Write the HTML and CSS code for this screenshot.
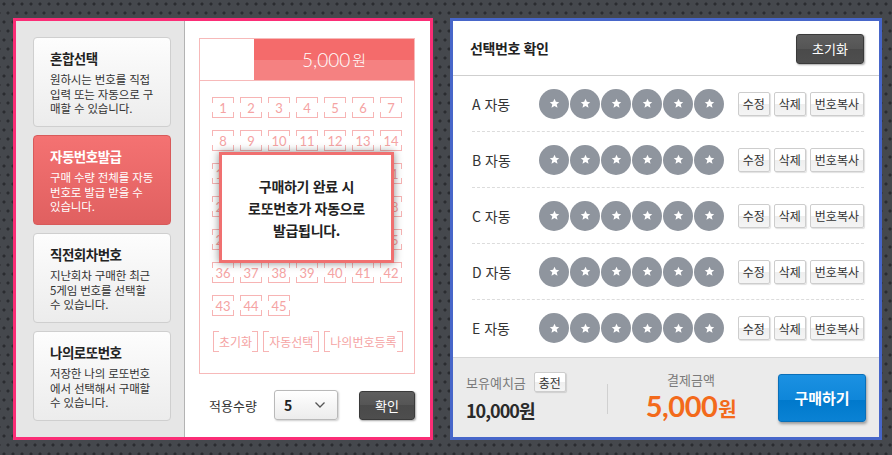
FILE: index.html
```html
<!DOCTYPE html>
<html lang="ko">
<head>
<meta charset="utf-8">
<link rel="stylesheet" href="styles.css">
</head>
<body>
<div class="page">
  <section class="left-panel">
    <nav class="modes">
      <div class="mode">
        <h3>혼합선택</h3>
        <p>원하시는 번호를 직접<br>입력 또는 자동으로 구<br>매할 수 있습니다.</p>
      </div>
      <div class="mode active">
        <h3>자동번호발급</h3>
        <p>구매 수량 전체를 자동<br>번호로 발급 받을 수<br>있습니다.</p>
      </div>
      <div class="mode">
        <h3>직전회차번호</h3>
        <p>지난회차 구매한 최근<br>5게임 번호를 선택할<br>수 있습니다.</p>
      </div>
      <div class="mode">
        <h3>나의로또번호</h3>
        <p>저장한 나의 로또번호<br>에서 선택해서 구매할<br>수 있습니다.</p>
      </div>
    </nav>
    <div class="ticket-area">
      <div class="ticket">
        <div class="ticket-head">
          <div class="ticket-blank"></div>
          <div class="ticket-price">5,000<span>원</span></div>
        </div>
        <div class="nums">
          <span class="num">1</span><span class="num">2</span><span class="num">3</span><span class="num">4</span><span class="num">5</span><span class="num">6</span><span class="num">7</span>
          <span class="num">8</span><span class="num">9</span><span class="num">10</span><span class="num">11</span><span class="num">12</span><span class="num">13</span><span class="num">14</span>
          <span class="num">15</span><span class="num">16</span><span class="num">17</span><span class="num">18</span><span class="num">19</span><span class="num">20</span><span class="num">21</span>
          <span class="num">22</span><span class="num">23</span><span class="num">24</span><span class="num">25</span><span class="num">26</span><span class="num">27</span><span class="num">28</span>
          <span class="num">29</span><span class="num">30</span><span class="num">31</span><span class="num">32</span><span class="num">33</span><span class="num">34</span><span class="num">35</span>
          <span class="num">36</span><span class="num">37</span><span class="num">38</span><span class="num">39</span><span class="num">40</span><span class="num">41</span><span class="num">42</span>
          <span class="num">43</span><span class="num">44</span><span class="num">45</span>
        </div>
        <div class="ticket-btns">
          <span class="tbtn">초기화</span><span class="tbtn">자동선택</span><span class="tbtn">나의번호등록</span>
        </div>
      </div>
      <div class="qty-row">
        <span class="qty-label">적용수량</span>
        <div class="select"><span>5</span>
          <svg width="12" height="8" viewBox="0 0 12 8"><path d="M1.5 1.5 L6 6 L10.5 1.5" fill="none" stroke="#555" stroke-width="1.3"/></svg>
        </div>
        <button class="btn-dark confirm">확인</button>
      </div>
      <div class="popup">구매하기 완료 시<br>로또번호가 자동으로<br>발급됩니다.</div>
    </div>
  </section>

  <section class="right-panel">
    <header class="rp-head">
      <h2>선택번호 확인</h2>
      <button class="btn-dark reset">초기화</button>
    </header>
    <div class="rows">
      <div class="row"><span class="row-label">A 자동</span>
        <div class="balls"><i class="ball"><svg viewBox="0 0 12 12"><path d="M6 .8l1.5 3.4 3.7.3-2.8 2.4.9 3.6L6 8.6 2.7 10.5l.9-3.6L.8 4.5l3.7-.3z"/></svg></i><i class="ball"><svg viewBox="0 0 12 12"><path d="M6 .8l1.5 3.4 3.7.3-2.8 2.4.9 3.6L6 8.6 2.7 10.5l.9-3.6L.8 4.5l3.7-.3z"/></svg></i><i class="ball"><svg viewBox="0 0 12 12"><path d="M6 .8l1.5 3.4 3.7.3-2.8 2.4.9 3.6L6 8.6 2.7 10.5l.9-3.6L.8 4.5l3.7-.3z"/></svg></i><i class="ball"><svg viewBox="0 0 12 12"><path d="M6 .8l1.5 3.4 3.7.3-2.8 2.4.9 3.6L6 8.6 2.7 10.5l.9-3.6L.8 4.5l3.7-.3z"/></svg></i><i class="ball"><svg viewBox="0 0 12 12"><path d="M6 .8l1.5 3.4 3.7.3-2.8 2.4.9 3.6L6 8.6 2.7 10.5l.9-3.6L.8 4.5l3.7-.3z"/></svg></i><i class="ball"><svg viewBox="0 0 12 12"><path d="M6 .8l1.5 3.4 3.7.3-2.8 2.4.9 3.6L6 8.6 2.7 10.5l.9-3.6L.8 4.5l3.7-.3z"/></svg></i></div>
        <div class="acts"><button class="sbtn">수정</button><button class="sbtn">삭제</button><button class="sbtn">번호복사</button></div>
      </div>
      <div class="row"><span class="row-label">B 자동</span>
        <div class="balls"><i class="ball"><svg viewBox="0 0 12 12"><path d="M6 .8l1.5 3.4 3.7.3-2.8 2.4.9 3.6L6 8.6 2.7 10.5l.9-3.6L.8 4.5l3.7-.3z"/></svg></i><i class="ball"><svg viewBox="0 0 12 12"><path d="M6 .8l1.5 3.4 3.7.3-2.8 2.4.9 3.6L6 8.6 2.7 10.5l.9-3.6L.8 4.5l3.7-.3z"/></svg></i><i class="ball"><svg viewBox="0 0 12 12"><path d="M6 .8l1.5 3.4 3.7.3-2.8 2.4.9 3.6L6 8.6 2.7 10.5l.9-3.6L.8 4.5l3.7-.3z"/></svg></i><i class="ball"><svg viewBox="0 0 12 12"><path d="M6 .8l1.5 3.4 3.7.3-2.8 2.4.9 3.6L6 8.6 2.7 10.5l.9-3.6L.8 4.5l3.7-.3z"/></svg></i><i class="ball"><svg viewBox="0 0 12 12"><path d="M6 .8l1.5 3.4 3.7.3-2.8 2.4.9 3.6L6 8.6 2.7 10.5l.9-3.6L.8 4.5l3.7-.3z"/></svg></i><i class="ball"><svg viewBox="0 0 12 12"><path d="M6 .8l1.5 3.4 3.7.3-2.8 2.4.9 3.6L6 8.6 2.7 10.5l.9-3.6L.8 4.5l3.7-.3z"/></svg></i></div>
        <div class="acts"><button class="sbtn">수정</button><button class="sbtn">삭제</button><button class="sbtn">번호복사</button></div>
      </div>
      <div class="row"><span class="row-label">C 자동</span>
        <div class="balls"><i class="ball"><svg viewBox="0 0 12 12"><path d="M6 .8l1.5 3.4 3.7.3-2.8 2.4.9 3.6L6 8.6 2.7 10.5l.9-3.6L.8 4.5l3.7-.3z"/></svg></i><i class="ball"><svg viewBox="0 0 12 12"><path d="M6 .8l1.5 3.4 3.7.3-2.8 2.4.9 3.6L6 8.6 2.7 10.5l.9-3.6L.8 4.5l3.7-.3z"/></svg></i><i class="ball"><svg viewBox="0 0 12 12"><path d="M6 .8l1.5 3.4 3.7.3-2.8 2.4.9 3.6L6 8.6 2.7 10.5l.9-3.6L.8 4.5l3.7-.3z"/></svg></i><i class="ball"><svg viewBox="0 0 12 12"><path d="M6 .8l1.5 3.4 3.7.3-2.8 2.4.9 3.6L6 8.6 2.7 10.5l.9-3.6L.8 4.5l3.7-.3z"/></svg></i><i class="ball"><svg viewBox="0 0 12 12"><path d="M6 .8l1.5 3.4 3.7.3-2.8 2.4.9 3.6L6 8.6 2.7 10.5l.9-3.6L.8 4.5l3.7-.3z"/></svg></i><i class="ball"><svg viewBox="0 0 12 12"><path d="M6 .8l1.5 3.4 3.7.3-2.8 2.4.9 3.6L6 8.6 2.7 10.5l.9-3.6L.8 4.5l3.7-.3z"/></svg></i></div>
        <div class="acts"><button class="sbtn">수정</button><button class="sbtn">삭제</button><button class="sbtn">번호복사</button></div>
      </div>
      <div class="row"><span class="row-label">D 자동</span>
        <div class="balls"><i class="ball"><svg viewBox="0 0 12 12"><path d="M6 .8l1.5 3.4 3.7.3-2.8 2.4.9 3.6L6 8.6 2.7 10.5l.9-3.6L.8 4.5l3.7-.3z"/></svg></i><i class="ball"><svg viewBox="0 0 12 12"><path d="M6 .8l1.5 3.4 3.7.3-2.8 2.4.9 3.6L6 8.6 2.7 10.5l.9-3.6L.8 4.5l3.7-.3z"/></svg></i><i class="ball"><svg viewBox="0 0 12 12"><path d="M6 .8l1.5 3.4 3.7.3-2.8 2.4.9 3.6L6 8.6 2.7 10.5l.9-3.6L.8 4.5l3.7-.3z"/></svg></i><i class="ball"><svg viewBox="0 0 12 12"><path d="M6 .8l1.5 3.4 3.7.3-2.8 2.4.9 3.6L6 8.6 2.7 10.5l.9-3.6L.8 4.5l3.7-.3z"/></svg></i><i class="ball"><svg viewBox="0 0 12 12"><path d="M6 .8l1.5 3.4 3.7.3-2.8 2.4.9 3.6L6 8.6 2.7 10.5l.9-3.6L.8 4.5l3.7-.3z"/></svg></i><i class="ball"><svg viewBox="0 0 12 12"><path d="M6 .8l1.5 3.4 3.7.3-2.8 2.4.9 3.6L6 8.6 2.7 10.5l.9-3.6L.8 4.5l3.7-.3z"/></svg></i></div>
        <div class="acts"><button class="sbtn">수정</button><button class="sbtn">삭제</button><button class="sbtn">번호복사</button></div>
      </div>
      <div class="row"><span class="row-label">E 자동</span>
        <div class="balls"><i class="ball"><svg viewBox="0 0 12 12"><path d="M6 .8l1.5 3.4 3.7.3-2.8 2.4.9 3.6L6 8.6 2.7 10.5l.9-3.6L.8 4.5l3.7-.3z"/></svg></i><i class="ball"><svg viewBox="0 0 12 12"><path d="M6 .8l1.5 3.4 3.7.3-2.8 2.4.9 3.6L6 8.6 2.7 10.5l.9-3.6L.8 4.5l3.7-.3z"/></svg></i><i class="ball"><svg viewBox="0 0 12 12"><path d="M6 .8l1.5 3.4 3.7.3-2.8 2.4.9 3.6L6 8.6 2.7 10.5l.9-3.6L.8 4.5l3.7-.3z"/></svg></i><i class="ball"><svg viewBox="0 0 12 12"><path d="M6 .8l1.5 3.4 3.7.3-2.8 2.4.9 3.6L6 8.6 2.7 10.5l.9-3.6L.8 4.5l3.7-.3z"/></svg></i><i class="ball"><svg viewBox="0 0 12 12"><path d="M6 .8l1.5 3.4 3.7.3-2.8 2.4.9 3.6L6 8.6 2.7 10.5l.9-3.6L.8 4.5l3.7-.3z"/></svg></i><i class="ball"><svg viewBox="0 0 12 12"><path d="M6 .8l1.5 3.4 3.7.3-2.8 2.4.9 3.6L6 8.6 2.7 10.5l.9-3.6L.8 4.5l3.7-.3z"/></svg></i></div>
        <div class="acts"><button class="sbtn">수정</button><button class="sbtn">삭제</button><button class="sbtn">번호복사</button></div>
      </div>
    </div>
    <footer class="rp-foot">
      <div class="deposit">
        <div class="dep-top"><span class="muted">보유예치금</span><button class="sbtn charge">충전</button></div>
        <div class="dep-amt">10,000원</div>
      </div>
      <div class="vsep"></div>
      <div class="pay">
        <div class="muted">결제금액</div>
        <div class="pay-amt">5,000<span>원</span></div>
      </div>
      <button class="buy">구매하기</button>
    </footer>
  </section>
</div>
</body>
</html>
```

FILE: styles.css
```css
* { box-sizing: border-box; }
html, body { margin: 0; padding: 0; }
body {
  width: 892px;
  height: 455px;
  overflow: hidden;
  font-family: "Noto Sans CJK KR", "Noto Sans", sans-serif;
  color: #333;
  background-color: #45484d;
  background-image:
    radial-gradient(circle at 4px 4px, #2a2c30 1.3px, transparent 1.8px),
    radial-gradient(circle at 4px 4px, #2a2c30 1.3px, transparent 1.8px);
  background-size: 9px 18px, 9px 18px;
  background-position: 0 0, 4px 9px;
}
button { font-family: inherit; cursor: pointer; }
h2, h3, p { margin: 0; }

.page {
  display: flex;
  gap: 17px;
  padding: 18px 0 0 13px;
}

/* ---------- left panel ---------- */
.left-panel {
  width: 420px;
  height: 422px;
  border: 3px solid #fb2d76;
  background: #fff;
  display: flex;
}
.modes {
  width: 169px;
  background: #e6e6e6;
  border-right: 1px solid #b3b3b3;
  padding: 16px 0 0 17px;
  display: flex;
  flex-direction: column;
  gap: 8px;
}
.mode {
  width: 138px;
  height: 90px;
  border: 1px solid #cfcfcf;
  border-radius: 4px;
  background: linear-gradient(#fdfdfd, #ececec);
  padding: 11px 0 0 16px;
}
.mode h3 {
  font-size: 13.5px;
  font-weight: 700;
  color: #222;
  letter-spacing: -0.5px;
  line-height: 18px;
  margin-bottom: 5px;
}
.mode p {
  font-size: 11.5px;
  line-height: 14.5px;
  color: #333;
  letter-spacing: -0.15px;
  white-space: nowrap;
}
.mode.active {
  background: linear-gradient(#f47272, #e06060);
  border-color: #d85a5a;
}
.mode.active h3, .mode.active p { color: #fff; }

.ticket-area {
  position: relative;
  flex: 1;
  padding: 17px 14px 0 14px;
}
.ticket {
  width: 216px;
  height: 336px;
  border: 1px solid #f7b9b9;
}
.ticket-head {
  display: flex;
  height: 42px;
  border-bottom: 1px solid #f7b9b9;
}
.ticket-blank { width: 54px; }
.ticket-price {
  flex: 1;
  background: linear-gradient(#f46b6b 0, #f46b6b 50%, #f58181 50%, #f58181 100%);
  color: #fff;
  font-family: "Lato", "Noto Sans CJK KR", sans-serif;
  font-weight: 300;
  font-size: 19px;
  display: flex;
  align-items: center;
  justify-content: center;
  padding-bottom: 1px;
}
.ticket-price span {
  font-family: "Noto Sans CJK KR", sans-serif;
  font-size: 15px;
  margin-left: 2px;
}
.nums {
  display: grid;
  grid-template-columns: repeat(7, 22px);
  column-gap: 6px;
  row-gap: 12px;
  padding: 16px 0 0 12px;
}
.num {
  height: 21px;
  border-top: 1px solid #f7b4b4;
  border-bottom: 1px solid #f7b4b4;
  color: #f5a3a3;
  font-family: "Lato", sans-serif;
  font-size: 13px;
  font-weight: 400;
  display: flex;
  align-items: center;
  justify-content: center;
  background:
    linear-gradient(#f7b4b4, #f7b4b4) left top / 1px 5px no-repeat,
    linear-gradient(#f7b4b4, #f7b4b4) right top / 1px 5px no-repeat,
    linear-gradient(#f7b4b4, #f7b4b4) left bottom / 1px 5px no-repeat,
    linear-gradient(#f7b4b4, #f7b4b4) right bottom / 1px 5px no-repeat;
}
.ticket-btns {
  display: flex;
  gap: 5px;
  padding: 15px 0 0 13px;
}
.tbtn {
  height: 21px;
  padding: 0 5px;
  border-left: 1px solid #f7b4b4;
  border-right: 1px solid #f7b4b4;
  color: #f5a3a3;
  font-size: 12px;
  display: flex;
  align-items: center;
  background:
    linear-gradient(#f7b4b4, #f7b4b4) left top / 5px 1px no-repeat,
    linear-gradient(#f7b4b4, #f7b4b4) right top / 5px 1px no-repeat,
    linear-gradient(#f7b4b4, #f7b4b4) left bottom / 5px 1px no-repeat,
    linear-gradient(#f7b4b4, #f7b4b4) right bottom / 5px 1px no-repeat;
}
.qty-row {
  display: flex;
  align-items: center;
  margin-top: 16px;
  padding-left: 10px;
  width: 216px;
}
.qty-label {
  font-size: 13px;
  color: #333;
  width: 65px;
}
.select {
  width: 64px;
  height: 30px;
  border: 1px solid #b9b9b9;
  border-radius: 3px;
  background: linear-gradient(#fff, #ececec);
  box-shadow: 1px 1px 2px rgba(0,0,0,.2);
  display: flex;
  align-items: center;
  justify-content: space-between;
  padding: 0 11px 0 9px;
  font-size: 14px;
  font-weight: 700;
  color: #222;
}
.btn-dark {
  border: 1px solid #3a3a3a;
  border-radius: 3px;
  background: linear-gradient(#5e5e5e 0, #555 50%, #4a4a4a 50%, #4e4e4e 100%);
  color: #fff;
  font-size: 13px;
  box-shadow: 1px 1px 2px rgba(0,0,0,.35);
}
.confirm {
  margin-left: auto;
  width: 56px;
  height: 29px;
  padding: 0;
}
.popup {
  position: absolute;
  left: 34px;
  top: 131px;
  width: 175px;
  height: 111px;
  border: 3px solid #f07070;
  background: #fff;
  box-shadow: 0 0 8px rgba(0,0,0,.45);
  font-size: 14px;
  font-weight: 700;
  color: #222;
  line-height: 22px;
  text-align: center;
  display: flex;
  align-items: center;
  justify-content: center;
  letter-spacing: -0.3px;
}

/* ---------- right panel ---------- */
.right-panel {
  width: 432px;
  height: 422px;
  border: 3px solid #4766c9;
  background: #fff;
  display: flex;
  flex-direction: column;
}
.rp-head {
  height: 55px;
  border-bottom: 1px solid #cfcfcf;
  display: flex;
  align-items: center;
  justify-content: space-between;
  padding: 0 15px 0 17px;
  flex-shrink: 0;
}
.rp-head h2 {
  font-size: 14px;
  font-weight: 700;
  color: #222;
  letter-spacing: -0.4px;
}
.reset {
  width: 68px;
  height: 30px;
  padding: 0;
  margin-top: 1px;
}
.rows { padding: 0 15px 0 19px; }
.row {
  height: 56px;
  display: flex;
  align-items: center;
  border-bottom: 1px dashed #dcdcdc;
}
.row:last-child { border-bottom: none; }
.row-label {
  width: 67px;
  font-size: 14px;
  color: #333;
}
.balls { display: flex; gap: 1px; }
.ball {
  width: 30px;
  height: 30px;
  border-radius: 50%;
  background: #8f959e;
  display: flex;
  align-items: center;
  justify-content: center;
}
.ball svg { width: 11px; height: 11px; fill: #fff; }
.acts { margin-left: auto; display: flex; gap: 4px; }
.sbtn {
  height: 24px;
  padding: 0 4px;
  border: 1px solid #cdcdcd;
  border-radius: 2px;
  background: linear-gradient(#fff 0, #fff 50%, #efefef 50%, #f4f4f4 100%);
  box-shadow: 1px 1px 1px rgba(0,0,0,.12);
  font-size: 12px;
  color: #333;
}
.rp-foot {
  margin-top: auto;
  height: 80px;
  background: #ebebeb;
  border-top: 1px solid #d6d6d6;
  display: flex;
  align-items: center;
  padding: 0 13px 0 13px;
  flex-shrink: 0;
}
.deposit { width: 141px; }
.dep-top { display: flex; align-items: center; gap: 8px; }
.muted { font-size: 13px; color: #7a7a7a; }
.charge { height: 20px; padding: 0 4px; font-size: 12px; }
.dep-amt {
  margin-top: 5px;
  font-size: 18px;
  font-weight: 700;
  color: #2a2a2a;
  letter-spacing: -1px;
}
.vsep { width: 1px; height: 30px; background: #d0d0d0; margin-top: 2px; }
.pay {
  flex: 1;
  text-align: center;
  padding-right: 4px;
}
.pay-amt {
  color: #f36a1b;
  font-family: "Lato", sans-serif;
  font-weight: 700;
  font-size: 29px;
  line-height: 34px;
  letter-spacing: -0.5px;
}
.pay-amt span {
  font-family: "Noto Sans CJK KR", sans-serif;
  font-size: 20px;
  margin-left: 1px;
}
.buy {
  width: 88px;
  height: 48px;
  border: 1px solid #0a6fb8;
  border-radius: 3px;
  background: linear-gradient(#1b91e2 0, #0f86d9 55%, #0079cc 55%, #0a82d4 100%);
  color: #fff;
  font-size: 15px;
  font-weight: 700;
  box-shadow: 1px 2px 3px rgba(0,0,0,.35);
  padding: 0;
}
```
